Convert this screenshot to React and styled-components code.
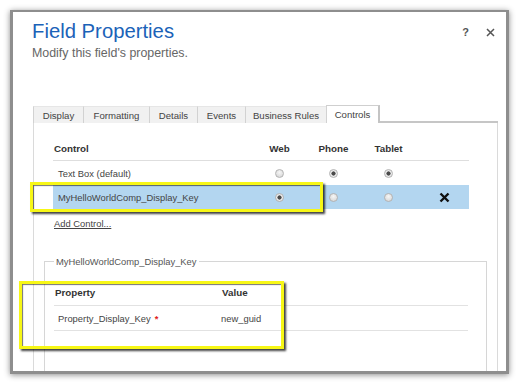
import React from "react";
import styled, { createGlobalStyle } from "styled-components";

const FONT = `"Liberation Sans", Arial, sans-serif`;

const GlobalStyle = createGlobalStyle`
  html, body {
    margin: 0;
    padding: 0;
    background: #fff;
  }
  body {
    font-family: ${FONT};
    width: 520px;
    height: 383px;
    overflow: hidden;
  }
`;

const Page = styled.div`
  position: relative;
  width: 520px;
  height: 383px;
  padding: 10px 0 0 10px;
  box-sizing: border-box;
`;

const Dialog = styled.div`
  box-sizing: border-box;
  width: 499px;
  height: 364px;
  border: 3px solid #8e8e8e;
  border-top-width: 2px;
  box-shadow: 0 1px 6px rgba(0, 0, 0, 0.45);
  background: #fff;
  display: flex;
  flex-direction: column;
  overflow: hidden;
`;

const Header = styled.div`
  display: flex;
  justify-content: space-between;
  padding: 8px 11px 0 19px;
`;

const Title = styled.h1`
  margin: 0;
  font-size: 20.3px;
  line-height: 23px;
  font-weight: normal;
  color: #1b62b8;
`;

const Subtitle = styled.p`
  margin: 3px 0 0;
  font-size: 12.4px;
  line-height: 15px;
  color: #666;
`;

const Actions = styled.div`
  display: flex;
  align-items: center;
  gap: 17px;
  margin-top: 6px;
  height: 13px;
  color: #555;
`;

const Help = styled.span`
  font-size: 11px;
  font-weight: bold;
  line-height: 13px;
`;

const TabStrip = styled.div`
  display: flex;
  align-items: flex-end;
  margin: 44px 8px 0 20px;
`;

const Tab = styled.div`
  box-sizing: border-box;
  width: ${(p) => p.$w}px;
  height: ${(p) => (p.$active ? 18 : 17)}px;
  display: flex;
  align-items: center;
  justify-content: center;
  font-size: 9.6px;
  color: #444;
  background: ${(p) => (p.$active ? "#fff" : "#f1f1f1")};
  border-left: 1px solid #d2d2d2;
  border-top: 1px solid ${(p) => (p.$active ? "#cfcfcf" : "#e6e6e6")};
  border-right: ${(p) => (p.$active ? "2px solid #c4c4c4" : "none")};
`;

const TabFill = styled.div`
  flex: 1;
  height: 17px;
  box-sizing: border-box;
  border-bottom: 2px solid #c6c6c6;
`;

const Panel = styled.div`
  flex: 1;
  margin: 0 8px 0 20px;
  padding-top: 10px;
  border-left: 1px solid #dadada;
  border-right: 1px solid #dadada;
  font-size: 9.4px;
  color: #444;
`;

const ControlTable = styled.div`
  margin: 0 28px 0 19px;
`;

const ControlRow = styled.div`
  display: grid;
  grid-template-columns: 199px 54px 54px 56px 1fr;
  align-items: center;
  box-sizing: border-box;
  height: ${(p) => (p.$head ? 28 : 24)}px;
  padding-top: ${(p) => (p.$head ? 3 : 0)}px;
  background: ${(p) => (p.$selected ? "#b3d6f0" : "transparent")};
  border-bottom: ${(p) => (p.$head ? "1px solid #dedede" : "none")};
`;

const HeadCell = styled.div`
  font-weight: bold;
  font-size: 9.8px;
  color: #333;
  padding-left: 1px;
  text-align: ${(p) => (p.$center ? "center" : "left")};
`;

const NameCell = styled.div`
  padding-left: 5px;
  color: #444;
`;

const Radio = styled.span`
  justify-self: center;
  width: 9px;
  height: 9px;
  box-sizing: border-box;
  border-radius: 50%;
  border: 1px solid #b3b3b3;
  background: ${(p) =>
    p.$checked
      ? "radial-gradient(circle, #4a4a4a 0 1.8px, #f2f2f2 2.4px, #d6d6d6 100%)"
      : "radial-gradient(circle at 50% 35%, #f6f6f6, #d2d2d2)"};
`;

const DeleteCell = styled.div`
  display: flex;
  justify-content: center;
  padding-left: 3px;
`;

const AddControl = styled.a`
  display: block;
  margin: 8px 0 0 20px;
  line-height: 14px;
  color: #444;
  text-decoration: underline;
`;

const FieldSet = styled.fieldset`
  margin: 25px 10px 0;
  padding: 0 18px 60px 9px;
  border: 1px solid #d6d6d6;
  min-width: 0;
`;

const Legend = styled.legend`
  padding: 0 2px;
  font-size: 9.4px;
  color: #555;
`;

const PropTable = styled.div`
  margin-top: 12px;
`;

const PropRow = styled.div`
  display: grid;
  grid-template-columns: 167px 1fr;
  align-items: center;
  box-sizing: border-box;
  height: ${(p) => (p.$head ? 27 : 25)}px;
  border-bottom: 1px solid #e2e2e2;
`;

const PropName = styled.div`
  padding-left: 4px;
`;

const Required = styled.span`
  color: #e02020;
  font-weight: bold;
  margin-left: 4px;
`;

const Callout = styled.div`
  position: absolute;
  left: ${(p) => p.$x}px;
  top: ${(p) => p.$y}px;
  width: ${(p) => p.$w}px;
  height: ${(p) => p.$h}px;
  box-sizing: border-box;
  border: 3px solid #f7f716;
  box-shadow: 2px 2px 2px rgba(0, 0, 0, 0.75),
    inset 1px 1px 1px rgba(0, 0, 0, 0.55);
  pointer-events: none;
`;

const CloseIcon = () => (
  <svg width="9" height="9" viewBox="0 0 9 9">
    <path d="M1 1L8 8M8 1L1 8" stroke="#555" strokeWidth="1.5" />
  </svg>
);

const DeleteIcon = () => (
  <svg width="11" height="11" viewBox="0 0 11 11">
    <path d="M1.5 1.5L9.5 9.5M9.5 1.5L1.5 9.5" stroke="#111" strokeWidth="2.4" />
  </svg>
);

const tabs = [
  { label: "Display", w: 50 },
  { label: "Formatting", w: 66 },
  { label: "Details", w: 48 },
  { label: "Events", w: 48 },
  { label: "Business Rules", w: 81 },
  { label: "Controls", w: 54, active: true },
];

const controls = [
  { name: "Text Box (default)", web: false, phone: true, tablet: true },
  {
    name: "MyHelloWorldComp_Display_Key",
    web: true,
    phone: false,
    tablet: false,
    selected: true,
  },
];

export default function App() {
  return (
    <Page>
      <GlobalStyle />
      <Dialog>
        <Header>
          <div>
            <Title>Field Properties</Title>
            <Subtitle>Modify this field's properties.</Subtitle>
          </div>
          <Actions>
            <Help>?</Help>
            <CloseIcon />
          </Actions>
        </Header>

        <TabStrip>
          {tabs.map((t) => (
            <Tab key={t.label} $w={t.w} $active={t.active}>
              {t.label}
            </Tab>
          ))}
          <TabFill />
        </TabStrip>

        <Panel>
          <ControlTable>
            <ControlRow $head>
              <HeadCell>Control</HeadCell>
              <HeadCell $center>Web</HeadCell>
              <HeadCell $center>Phone</HeadCell>
              <HeadCell $center>Tablet</HeadCell>
              <div />
            </ControlRow>
            {controls.map((c) => (
              <ControlRow key={c.name} $selected={c.selected}>
                <NameCell>{c.name}</NameCell>
                <Radio $checked={c.web} />
                <Radio $checked={c.phone} />
                <Radio $checked={c.tablet} />
                <DeleteCell>{c.selected && <DeleteIcon />}</DeleteCell>
              </ControlRow>
            ))}
          </ControlTable>
          <AddControl>Add Control...</AddControl>

          <FieldSet>
            <Legend>MyHelloWorldComp_Display_Key</Legend>
            <PropTable>
              <PropRow $head>
                <HeadCell>Property</HeadCell>
                <HeadCell>Value</HeadCell>
              </PropRow>
              <PropRow>
                <PropName>
                  Property_Display_Key<Required>*</Required>
                </PropName>
                <div>new_guid</div>
              </PropRow>
            </PropTable>
          </FieldSet>
        </Panel>
      </Dialog>

      <Callout $x={30} $y={182} $w={293} $h={30} />
      <Callout $x={19} $y={281} $w={265} $h={68} />
    </Page>
  );
}
